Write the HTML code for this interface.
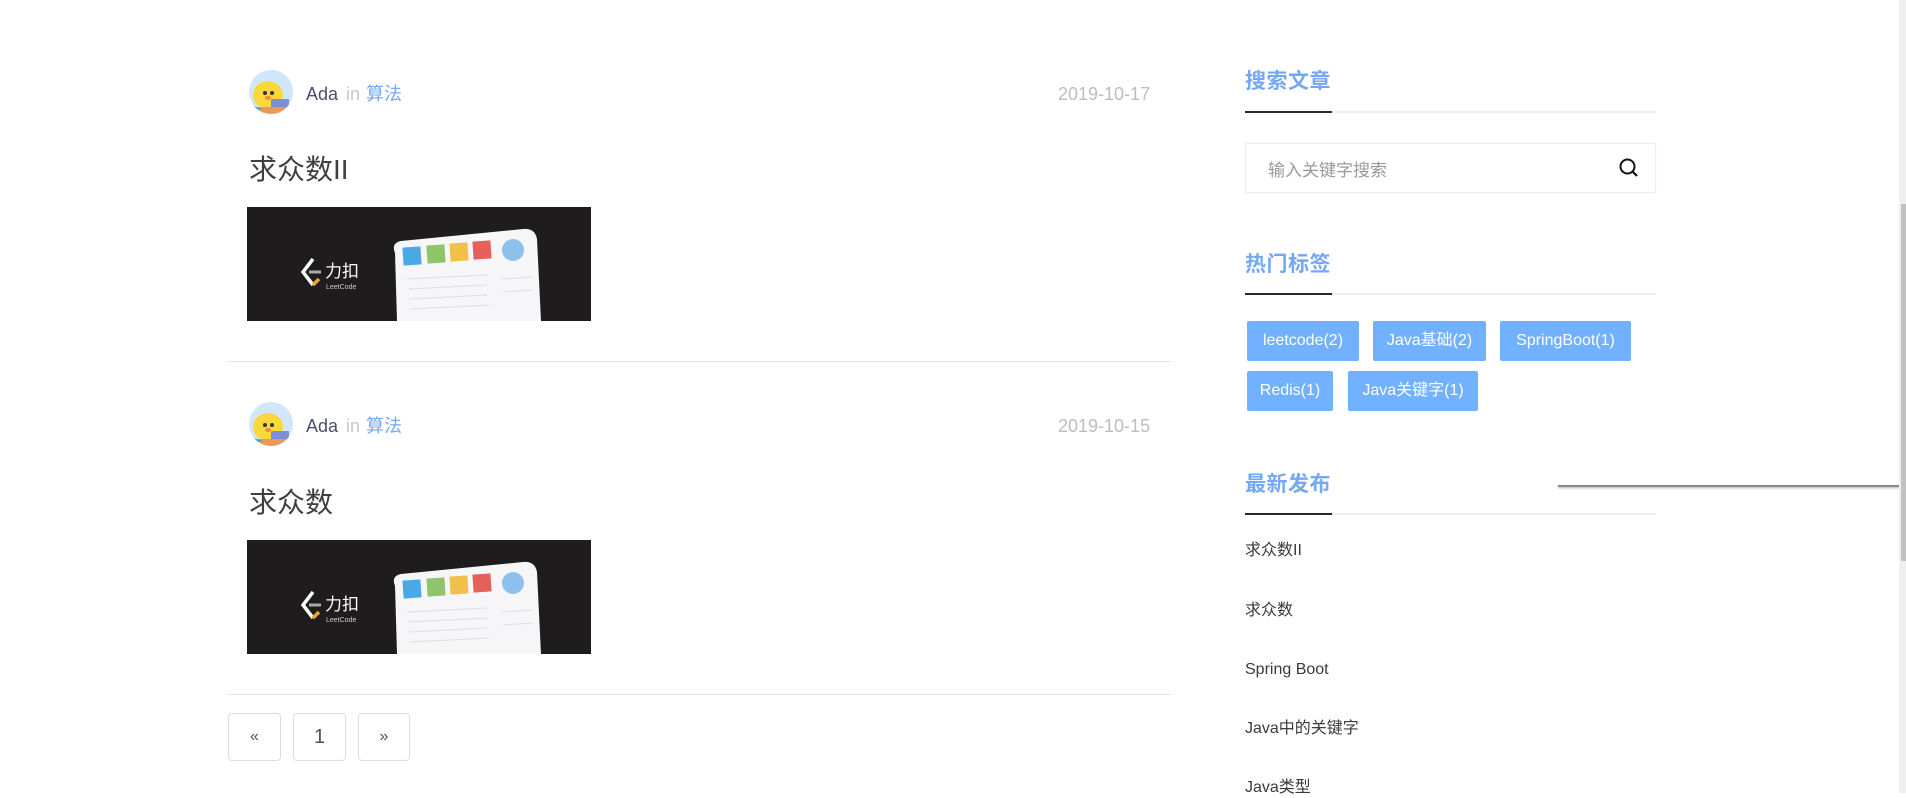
<!DOCTYPE html>
<html><head><meta charset="utf-8"><style>
*{margin:0;padding:0;box-sizing:border-box}
body{width:1906px;height:793px;overflow:hidden;background:#fff;position:relative;font-family:"Liberation Sans","Noto Sans CJK SC",sans-serif}
.a{position:absolute}
.meta{font-size:18px;color:#4a4f6a;white-space:nowrap;line-height:24px}
.meta .in{color:#c8c8c8;margin:0 6px 0 8px}
.meta .cat{color:#74a8f5}
.date{font-size:18px;color:#bdbdbd;line-height:24px}
.title{font-size:28px;color:#3f3f3f}
.hr{height:1px;background:#e6e6e6}
.pg{border:1px solid #ddd;border-radius:4px;height:48px;text-align:center;line-height:46px;color:#4a4f6a}
.h{font-size:21px;font-weight:bold;color:#74a8f5;letter-spacing:0.5px}
.line{height:2px;background:#eee;width:411px}
.line b{display:block;width:87px;height:2px;background:#2b2b2b}
.tag{background:#72b1ff;color:#fff;font-size:16px;height:40px;line-height:40px;text-align:center;border-radius:2px}
.li{font-size:16px;color:#3b3b3b;line-height:20px;height:20px}
</style></head><body>

<svg width="0" height="0" style="position:absolute"><defs>
<g id="av"><clipPath id="c"><circle cx="22" cy="22" r="22"/></clipPath>
<g clip-path="url(#c)"><rect width="44" height="44" fill="#cfe6fb"/>
<ellipse cx="19" cy="25" rx="15" ry="14" fill="#fbd83a"/>
<circle cx="16" cy="23" r="2" fill="#333"/><circle cx="23" cy="23" r="2" fill="#333"/>
<ellipse cx="19" cy="28" rx="3" ry="2" fill="#f08a4a"/>
<rect x="22" y="29" width="18" height="9" rx="1" fill="#7b8fd8"/>
<rect x="0" y="37" width="44" height="7" fill="#e89a5c"/>
<path d="M4 36 l10 3 -10 2z" fill="#3da0e0"/></g></g>
<g id="img"><rect width="344" height="114" fill="#1e1c1d"/>
<path d="M148 46 Q144 36 154 34 L276 22 Q288 21 290 32 L294 114 L150 114Z" fill="#f6f6f8"/>
<rect x="156" y="40" width="18" height="18" fill="#4aa8e6" transform="rotate(-4 165 49)"/>
<rect x="180" y="38" width="18" height="18" fill="#8fc46a" transform="rotate(-4 189 47)"/>
<rect x="203" y="36" width="18" height="18" fill="#f2c04a" transform="rotate(-4 212 45)"/>
<rect x="226" y="34" width="18" height="18" fill="#e6605a" transform="rotate(-4 235 43)"/>
<circle cx="266" cy="43" r="11" fill="#8cc1ec"/>
<g stroke="#ddd" stroke-width="1"><line x1="160" y1="72" x2="240" y2="68"/><line x1="162" y1="82" x2="240" y2="78"/><line x1="162" y1="92" x2="240" y2="88"/><line x1="163" y1="102" x2="242" y2="98"/><line x1="255" y1="72" x2="285" y2="70"/><line x1="256" y1="85" x2="286" y2="83"/></g>
<path d="M66 52 L56 65 L66 78" stroke="#fff" stroke-width="3.5" fill="none"/>
<path d="M66 78 L72 72" stroke="#f0a728" stroke-width="3.5"/>
<path d="M62 65 H74" stroke="#aaa" stroke-width="3"/>
<text x="78" y="70" fill="#fff" font-size="17" font-family="Noto Sans CJK SC,sans-serif">力扣</text>
<text x="79" y="82" fill="#ccc" font-size="7" font-family="Liberation Sans,sans-serif">LeetCode</text></g>
</defs></svg>

<!-- post 1 -->
<svg class="a" style="left:249px;top:70px" width="44" height="44"><use href="#av"/></svg>
<div class="a meta" style="left:306px;top:82px">Ada<span class="in">in</span><span class="cat">算法</span></div>
<div class="a date" style="left:1058px;top:82px">2019-10-17</div>
<div class="a title" style="left:249px;top:148px">求众数II</div>
<svg class="a" style="left:247px;top:207px" width="344" height="114"><use href="#img"/></svg>
<div class="a hr" style="left:227px;top:361px;width:944px"></div>

<!-- post 2 -->
<svg class="a" style="left:249px;top:402px" width="44" height="44"><use href="#av"/></svg>
<div class="a meta" style="left:306px;top:414px">Ada<span class="in">in</span><span class="cat">算法</span></div>
<div class="a date" style="left:1058px;top:414px">2019-10-15</div>
<div class="a title" style="left:249px;top:481px">求众数</div>
<svg class="a" style="left:247px;top:540px" width="344" height="114"><use href="#img"/></svg>
<div class="a hr" style="left:227px;top:694px;width:944px"></div>

<div class="a pg" style="left:228px;top:713px;width:53px;font-size:16px">«</div>
<div class="a pg" style="left:293px;top:713px;width:53px;font-size:20px">1</div>
<div class="a pg" style="left:358px;top:713px;width:52px;font-size:16px">»</div>

<!-- sidebar -->
<div class="a h" style="left:1245px;top:65px">搜索文章</div>
<div class="a line" style="left:1245px;top:111px"><b></b></div>
<div class="a" style="left:1245px;top:143px;width:411px;height:50px;border:1px solid #eee;border-radius:2px;box-shadow:0 0 2px rgba(0,0,0,.04)">
<span class="a" style="left:22px;top:12px;font-size:17px;color:#999">输入关键字搜索</span>
<svg class="a" style="left:372px;top:13px" width="22" height="22" viewBox="0 0 22 22"><circle cx="9.5" cy="9.5" r="7" stroke="#111" stroke-width="2" fill="none"/><path d="M14.5 14.5 L19 19" stroke="#111" stroke-width="2.2"/></svg>
</div>

<div class="a h" style="left:1245px;top:248px">热门标签</div>
<div class="a line" style="left:1245px;top:293px"><b></b></div>
<div class="a tag" style="left:1247px;top:321px;width:112px">leetcode(2)</div>
<div class="a tag" style="left:1373px;top:321px;width:113px">Java基础(2)</div>
<div class="a tag" style="left:1500px;top:321px;width:131px">SpringBoot(1)</div>
<div class="a tag" style="left:1247px;top:371px;width:86px">Redis(1)</div>
<div class="a tag" style="left:1348px;top:371px;width:130px">Java关键字(1)</div>

<div class="a h" style="left:1245px;top:468px">最新发布</div>
<div class="a line" style="left:1245px;top:513px"><b></b></div>
<div class="a li" style="left:1245px;top:541px">求众数II</div>
<div class="a li" style="left:1245px;top:601px">求众数</div>
<div class="a li" style="left:1245px;top:660px">Spring Boot</div>
<div class="a li" style="left:1245px;top:719px">Java中的关键字</div>
<div class="a li" style="left:1245px;top:778px">Java类型</div>

<div class="a" style="left:1558px;top:485px;width:348px;height:2px;background:#8a8a8a;box-shadow:0 1px 2px rgba(0,0,0,.3)"></div>
<div class="a" style="left:1899px;top:0;width:7px;height:793px;background:#efefef"></div>
<div class="a" style="left:1901px;top:204px;width:5px;height:357px;background:#c1c1c1"></div>
</body></html>
